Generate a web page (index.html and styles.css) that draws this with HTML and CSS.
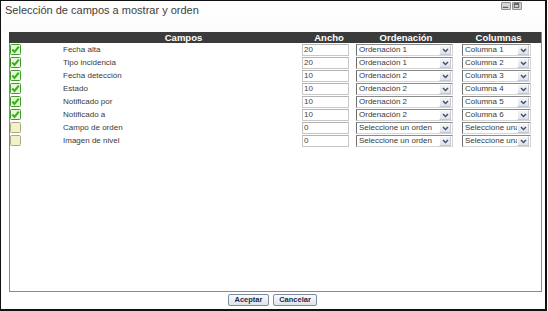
FILE: index.html
```html
<!DOCTYPE html>
<html lang="es">
<head>
<meta charset="utf-8">
<link rel="stylesheet" href="styles.css">
</head>
<body>
<div class="window">
  <div class="titlebar">
    <span class="title">Selección de campos a mostrar y orden</span>
    <div class="winbtns">
      <span class="winbtn"><svg width="10" height="8" viewBox="0 0 10 8"><line x1="2" y1="5.5" x2="8" y2="5.5" stroke="#555" stroke-width="1.2"/></svg></span>
      <span class="winbtn"><svg width="10" height="8" viewBox="0 0 10 8"><rect x="2.5" y="1.5" width="5" height="4" fill="none" stroke="#555" stroke-width="1"/><line x1="2.5" y1="2" x2="7.5" y2="2" stroke="#555" stroke-width="1.5"/></svg></span>
    </div>
  </div>

  <div class="panel">
    <div class="grid">
      <div class="hd hd-campos">Campos</div>
      <div class="hd">Ancho</div>
      <div class="hd">Ordenación</div>
      <div class="hd">Columnas</div>

      <div class="cb on"><svg width="11" height="11" viewBox="0 0 11 11"><rect x="0.5" y="0.5" width="10" height="10" rx="1" fill="#eaf6dc" stroke="#3f9a2a"/><path d="M2.3 5.6 L4.5 7.9 L8.8 2.6" fill="none" stroke="#36b01e" stroke-width="2.1"/></svg></div>
      <div class="lbl">Fecha alta</div>
      <div class="inp">20</div>
      <div class="sel ord"><span class="txt">Ordenación 1</span><span class="arr"><svg width="7" height="5" viewBox="0 0 7 5"><path d="M1 1 L3.5 3.6 L6 1" fill="none" stroke="#3d4f73" stroke-width="1.4"/></svg></span></div>
      <div class="sel col"><span class="txt">Columna 1</span><span class="arr"><svg width="7" height="5" viewBox="0 0 7 5"><path d="M1 1 L3.5 3.6 L6 1" fill="none" stroke="#3d4f73" stroke-width="1.4"/></svg></span></div>

      <div class="cb on"><svg width="11" height="11" viewBox="0 0 11 11"><rect x="0.5" y="0.5" width="10" height="10" rx="1" fill="#eaf6dc" stroke="#3f9a2a"/><path d="M2.3 5.6 L4.5 7.9 L8.8 2.6" fill="none" stroke="#36b01e" stroke-width="2.1"/></svg></div>
      <div class="lbl">Tipo incidencia</div>
      <div class="inp">20</div>
      <div class="sel ord"><span class="txt">Ordenación 1</span><span class="arr"><svg width="7" height="5" viewBox="0 0 7 5"><path d="M1 1 L3.5 3.6 L6 1" fill="none" stroke="#3d4f73" stroke-width="1.4"/></svg></span></div>
      <div class="sel col"><span class="txt">Columna 2</span><span class="arr"><svg width="7" height="5" viewBox="0 0 7 5"><path d="M1 1 L3.5 3.6 L6 1" fill="none" stroke="#3d4f73" stroke-width="1.4"/></svg></span></div>

      <div class="cb on"><svg width="11" height="11" viewBox="0 0 11 11"><rect x="0.5" y="0.5" width="10" height="10" rx="1" fill="#eaf6dc" stroke="#3f9a2a"/><path d="M2.3 5.6 L4.5 7.9 L8.8 2.6" fill="none" stroke="#36b01e" stroke-width="2.1"/></svg></div>
      <div class="lbl">Fecha detección</div>
      <div class="inp">10</div>
      <div class="sel ord"><span class="txt">Ordenación 2</span><span class="arr"><svg width="7" height="5" viewBox="0 0 7 5"><path d="M1 1 L3.5 3.6 L6 1" fill="none" stroke="#3d4f73" stroke-width="1.4"/></svg></span></div>
      <div class="sel col"><span class="txt">Columna 3</span><span class="arr"><svg width="7" height="5" viewBox="0 0 7 5"><path d="M1 1 L3.5 3.6 L6 1" fill="none" stroke="#3d4f73" stroke-width="1.4"/></svg></span></div>

      <div class="cb on"><svg width="11" height="11" viewBox="0 0 11 11"><rect x="0.5" y="0.5" width="10" height="10" rx="1" fill="#eaf6dc" stroke="#3f9a2a"/><path d="M2.3 5.6 L4.5 7.9 L8.8 2.6" fill="none" stroke="#36b01e" stroke-width="2.1"/></svg></div>
      <div class="lbl">Estado</div>
      <div class="inp">10</div>
      <div class="sel ord"><span class="txt">Ordenación 2</span><span class="arr"><svg width="7" height="5" viewBox="0 0 7 5"><path d="M1 1 L3.5 3.6 L6 1" fill="none" stroke="#3d4f73" stroke-width="1.4"/></svg></span></div>
      <div class="sel col"><span class="txt">Columna 4</span><span class="arr"><svg width="7" height="5" viewBox="0 0 7 5"><path d="M1 1 L3.5 3.6 L6 1" fill="none" stroke="#3d4f73" stroke-width="1.4"/></svg></span></div>

      <div class="cb on"><svg width="11" height="11" viewBox="0 0 11 11"><rect x="0.5" y="0.5" width="10" height="10" rx="1" fill="#eaf6dc" stroke="#3f9a2a"/><path d="M2.3 5.6 L4.5 7.9 L8.8 2.6" fill="none" stroke="#36b01e" stroke-width="2.1"/></svg></div>
      <div class="lbl">Notificado por</div>
      <div class="inp">10</div>
      <div class="sel ord"><span class="txt">Ordenación 2</span><span class="arr"><svg width="7" height="5" viewBox="0 0 7 5"><path d="M1 1 L3.5 3.6 L6 1" fill="none" stroke="#3d4f73" stroke-width="1.4"/></svg></span></div>
      <div class="sel col"><span class="txt">Columna 5</span><span class="arr"><svg width="7" height="5" viewBox="0 0 7 5"><path d="M1 1 L3.5 3.6 L6 1" fill="none" stroke="#3d4f73" stroke-width="1.4"/></svg></span></div>

      <div class="cb on"><svg width="11" height="11" viewBox="0 0 11 11"><rect x="0.5" y="0.5" width="10" height="10" rx="1" fill="#eaf6dc" stroke="#3f9a2a"/><path d="M2.3 5.6 L4.5 7.9 L8.8 2.6" fill="none" stroke="#36b01e" stroke-width="2.1"/></svg></div>
      <div class="lbl">Notificado a</div>
      <div class="inp">10</div>
      <div class="sel ord"><span class="txt">Ordenación 2</span><span class="arr"><svg width="7" height="5" viewBox="0 0 7 5"><path d="M1 1 L3.5 3.6 L6 1" fill="none" stroke="#3d4f73" stroke-width="1.4"/></svg></span></div>
      <div class="sel col"><span class="txt">Columna 6</span><span class="arr"><svg width="7" height="5" viewBox="0 0 7 5"><path d="M1 1 L3.5 3.6 L6 1" fill="none" stroke="#3d4f73" stroke-width="1.4"/></svg></span></div>

      <div class="cb off"><svg width="11" height="11" viewBox="0 0 11 11"><rect x="0.5" y="0.5" width="10" height="10" rx="1" fill="#f5f1c6" stroke="#a9a68a"/></svg></div>
      <div class="lbl">Campo de orden</div>
      <div class="inp">0</div>
      <div class="sel ord"><span class="txt">Seleccione un orden</span><span class="arr"><svg width="7" height="5" viewBox="0 0 7 5"><path d="M1 1 L3.5 3.6 L6 1" fill="none" stroke="#3d4f73" stroke-width="1.4"/></svg></span></div>
      <div class="sel col"><span class="txt">Seleccione una columna</span><span class="arr"><svg width="7" height="5" viewBox="0 0 7 5"><path d="M1 1 L3.5 3.6 L6 1" fill="none" stroke="#3d4f73" stroke-width="1.4"/></svg></span></div>

      <div class="cb off"><svg width="11" height="11" viewBox="0 0 11 11"><rect x="0.5" y="0.5" width="10" height="10" rx="1" fill="#f5f1c6" stroke="#a9a68a"/></svg></div>
      <div class="lbl">Imagen de nivel</div>
      <div class="inp">0</div>
      <div class="sel ord"><span class="txt">Seleccione un orden</span><span class="arr"><svg width="7" height="5" viewBox="0 0 7 5"><path d="M1 1 L3.5 3.6 L6 1" fill="none" stroke="#3d4f73" stroke-width="1.4"/></svg></span></div>
      <div class="sel col"><span class="txt">Seleccione una columna</span><span class="arr"><svg width="7" height="5" viewBox="0 0 7 5"><path d="M1 1 L3.5 3.6 L6 1" fill="none" stroke="#3d4f73" stroke-width="1.4"/></svg></span></div>
    </div>
  </div>

  <div class="actions">
    <button class="btn btn-ok">Aceptar</button>
    <button class="btn btn-cancel">Cancelar</button>
  </div>
</div>
</body>
</html>
```

FILE: styles.css
```css
html, body {
  margin: 0;
  padding: 0;
  background: #ffffff;
}

body {
  font-family: "Liberation Sans", Arial, sans-serif;
  color: #333;
}

.window {
  box-sizing: border-box;
  width: 547px;
  height: 311px;
  border: 1px solid #111;
  border-right-width: 2px;
  border-bottom-width: 2px;
  display: flex;
  flex-direction: column;
  background: #fff;
}

.titlebar {
  height: 31px;
  display: flex;
  align-items: flex-start;
  justify-content: space-between;
  padding: 0 23px 0 4px;
  background: linear-gradient(#ffffff, #fbfbfb);
}

.title {
  font-size: 11px;
  color: #3d3d3d;
  line-height: 13px;
  margin-top: 3px;
}

.winbtns {
  display: flex;
  gap: 1px;
  margin-top: 1px;
}

.winbtn {
  box-sizing: border-box;
  width: 10px;
  height: 8px;
  display: flex;
  background: #d6d6d6;
  border: 1px solid #8f8f8f;
  border-radius: 1px;
}

.winbtn svg {
  margin: -1px 0 0 -1px;
}

.panel {
  box-sizing: border-box;
  margin-left: 8px;
  width: 533px;
  height: 260px;
  border: 1px solid #8a8a8a;
  border-top: none;
}

.grid {
  display: grid;
  grid-template-columns: 53px 239px 54px 100px 1fr;
  grid-template-rows: 11px;
  grid-auto-rows: 13px;
  row-gap: 0;
}

.hd {
  background: #3b3b3b;
  color: #fff;
  font-size: 9.5px;
  font-weight: bold;
  line-height: 11px;
  text-align: center;
  margin-bottom: 1px;
  height: 11px;
}

.hd-campos {
  grid-column: 1 / 3;
  padding-left: 56px;
  margin-left: -1px;
}

.cb {
  padding-top: 1px;
  display: flex;
}

.lbl {
  font-size: 8px;
  line-height: 12px;
  color: #3a3a3a;
  padding-top: 1px;
}

.inp {
  box-sizing: border-box;
  width: 47px;
  height: 12px;
  margin-top: 1px;
  border: 1px solid #c7c7c7;
  border-top-color: #b5b5b5;
  font-size: 8px;
  line-height: 10px;
  padding-left: 1px;
  color: #444;
  background: #fff;
}

.sel {
  box-sizing: border-box;
  height: 12px;
  margin-top: 1px;
  display: flex;
  align-items: stretch;
  border: 1px solid #d4d4d4;
  border-left-color: #6e6e6e;
  border-top-color: #8a8a8a;
  background: #fff;
  overflow: hidden;
}

.sel.ord {
  width: 97px;
}

.sel.col {
  width: 69px;
  margin-left: 6px;
}

.txt {
  flex: 1;
  min-width: 0;
  font-size: 8px;
  line-height: 10px;
  padding-left: 2px;
  color: #3a3a3a;
  white-space: nowrap;
  overflow: hidden;
}

.arr {
  box-sizing: border-box;
  width: 12px;
  margin: 0 1px 0 0;
  display: flex;
  align-items: center;
  justify-content: center;
  background: linear-gradient(#f4f5f8, #dfe2ea);
  border: 1px solid #fff;
  border-right-color: #c4c8d2;
  border-bottom-color: #c4c8d2;
}

.actions {
  display: flex;
  justify-content: center;
  gap: 4px;
  margin-top: 2px;
  padding-right: 1px;
}

.btn {
  box-sizing: border-box;
  height: 12px;
  padding: 0;
  font-family: "Liberation Sans", Arial, sans-serif;
  font-size: 7.5px;
  font-weight: bold;
  color: #1d2b47;
  line-height: 10px;
  background: linear-gradient(#fafbfc, #dfe3ea);
  border: 1px solid #7f8ba0;
  border-radius: 2px;
}

.btn-ok {
  width: 41px;
}

.btn-cancel {
  width: 44px;
}
```
